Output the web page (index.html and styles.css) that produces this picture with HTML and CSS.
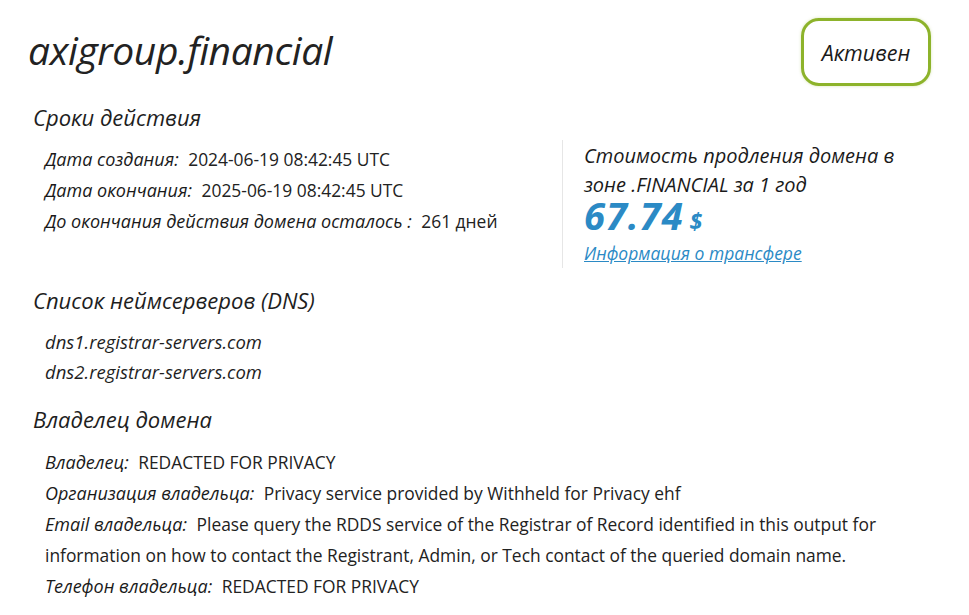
FILE: index.html
```html
<!DOCTYPE html>
<html lang="ru">
<head>
<meta charset="utf-8">
<link rel="stylesheet" href="styles.css">
</head>
<body>
<div class="page">
  <header class="head">
    <h1 class="domain">axigroup.financial</h1>
    <div class="status">Активен</div>
  </header>

  <section class="top">
    <div class="left">
      <h2 class="sec">Сроки действия</h2>
      <ul class="rows">
        <li><span class="lbl">Дата создания:</span> <span class="val">2024-06-19 08:42:45 UTC</span></li>
        <li><span class="lbl">Дата окончания:</span> <span class="val">2025-06-19 08:42:45 UTC</span></li>
        <li><span class="lbl">До окончания действия домена осталось :</span> <span class="val">261 дней</span></li>
      </ul>
    </div>
    <div class="price">
      <div class="ptitle">Стоимость продления домена в зоне .FINANCIAL за 1 год</div>
      <div class="amount">67.74<span class="cur">$</span></div>
      <a class="transfer" href="#">Информация о трансфере</a>
    </div>
  </section>

  <h2 class="sec dns-head">Список неймсерверов (DNS)</h2>
  <ul class="dns">
    <li>dns1.registrar-servers.com</li>
    <li>dns2.registrar-servers.com</li>
  </ul>

  <h2 class="sec owner-head">Владелец домена</h2>
  <ul class="rows owner">
    <li><span class="lbl">Владелец:</span> <span class="val">REDACTED FOR PRIVACY</span></li>
    <li><span class="lbl">Организация владельца:</span> <span class="val">Privacy service provided by Withheld for Privacy ehf</span></li>
    <li><span class="lbl">Email владельца:</span> Please query the RDDS service of the Registrar of Record identified in this output for information on how to contact the Registrant, Admin, or Tech contact of the queried domain name.</li>
    <li><span class="lbl">Телефон владельца:</span> <span class="val">REDACTED FOR PRIVACY</span></li>
  </ul>
</div>
</body>
</html>
```

FILE: styles.css
```css
* { box-sizing: border-box; }
html, body { margin: 0; padding: 0; background: #fff; }
body {
  font-family: "Open Sans", "Noto Sans", "Liberation Sans", sans-serif;
  color: #1f1f1f;
}
.page {
  width: 969px;
  padding: 18px 38px 0 28px;
}
.head {
  display: flex;
  justify-content: space-between;
  align-items: flex-start;
  height: 76px;
}
.domain {
  margin: 10px 0 0 0;
  font-size: 39px;
  font-weight: 500;
  font-style: italic;
  letter-spacing: -0.4px;
  color: #222;
  line-height: 44px;
}
.status {
  width: 130px;
  height: 68px;
  border: 3px solid #8db32b;
  border-radius: 18px;
  display: flex;
  align-items: center;
  justify-content: center;
  font-style: italic;
  font-weight: 500;
  font-size: 21.5px;
  color: #1a1a1a;
  box-shadow: 0 0 3px rgba(141,179,43,0.35);
}
.sec {
  margin: 0 0 0 5px;
  font-size: 22px;
  font-weight: 400;
  font-style: italic;
  line-height: 30px;
  color: #1e1e1e;
}
.top {
  display: flex;
  align-items: flex-start;
  margin-top: 8px;
}
.left { width: 534px; }
.rows {
  list-style: none;
  margin: 12px 0 0 0;
  padding: 0 0 0 17px;
  font-size: 17.4px;
  line-height: 31px;
  color: #222;
}
.lbl { font-style: italic; font-size: 18px; color: #1a1a1a; margin-right: 5px; }
.price {
  margin-top: 38px;
  border-left: 1px solid #e6e6e6;
  padding-left: 21px;
  height: 128px;
  width: 360px;
}
.ptitle {
  font-size: 20px;
  font-style: italic;
  line-height: 29px;
  color: #1a1a1a;
  width: 320px;
  padding-top: 1px;
}
.amount {
  font-size: 38px;
  font-weight: 700;
  font-style: italic;
  color: #2b8ac5;
  line-height: 32px;
  letter-spacing: 1px;
}
.cur { font-size: 23px; margin-left: 6px; }
.transfer {
  display: block;
  margin-top: 4px;
  font-size: 17.5px;
  line-height: 24px;
  font-style: italic;
  color: #2b8ac5;
  text-decoration: underline;
}
.dns-head { margin-top: 17px; }
.dns {
  list-style: none;
  margin: 12px 0 0 0;
  padding: 0 0 0 17px;
  font-size: 18.5px;
  font-style: italic;
  line-height: 30px;
}
.owner-head { margin-top: 17px; }
.owner { margin-top: 13px; width: 880px; }
```
